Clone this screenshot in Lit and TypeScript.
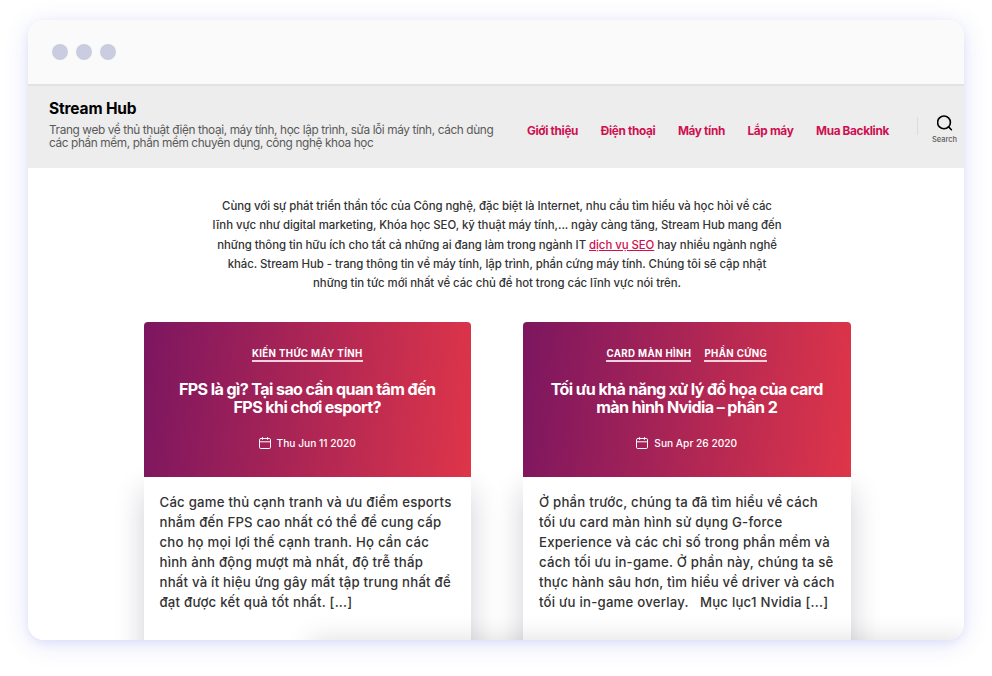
import { LitElement, html, css } from "lit";
import { customElement, property } from "lit/decorators.js";

interface Post {
  categories: string[];
  title: string[];
  date: string;
  excerpt: string[];
}

const NAV = ["Giới thiệu", "Điện thoại", "Máy tính", "Lắp máy", "Mua Backlink"];

const POSTS: Post[] = [
  {
    categories: ["Kiến thức máy tính"],
    title: ["FPS là gì? Tại sao cần quan tâm đến", "FPS khi chơi esport?"],
    date: "Thu Jun 11 2020",
    excerpt: [
      "Các game thủ cạnh tranh và ưu điểm esports",
      "nhắm đến FPS cao nhất có thể để cung cấp",
      "cho họ mọi lợi thế cạnh tranh. Họ cần các",
      "hình ảnh động mượt mà nhất, độ trễ thấp",
      "nhất và ít hiệu ứng gây mất tập trung nhất để",
      "đạt được kết quả tốt nhất. [...]",
    ],
  },
  {
    categories: ["Card màn hình", "Phần cứng"],
    title: ["Tối ưu khả năng xử lý đồ họa của card", "màn hình Nvidia – phần 2"],
    date: "Sun Apr 26 2020",
    excerpt: [
      "Ở phần trước, chúng ta đã tìm hiểu về cách",
      "tối ưu card màn hình sử dụng G-force",
      "Experience và các chỉ số trong phần mềm và",
      "cách tối ưu in-game. Ở phần này, chúng ta sẽ",
      "thực hành sâu hơn, tìm hiểu về driver và cách",
      "tối ưu in-game overlay.\u00a0\u00a0 Mục lục1 Nvidia [...]",
    ],
  },
];

@customElement("post-card")
export class PostCard extends LitElement {
  @property({ attribute: false }) post!: Post;

  static styles = css`
    :host {
      display: flex;
      flex-direction: column;
      border-radius: 4px;
      box-shadow: 0 168px 30px 0 rgba(20, 20, 60, 0.2);
      background: #fff;
    }
    .head {
      height: 154.5px;
      box-sizing: border-box;
      padding-top: 24px;
      border-radius: 4px 4px 0 0;
      background: linear-gradient(95deg, #7c1660 0%, #de3549 100%);
      color: #fff;
      display: flex;
      flex-direction: column;
      align-items: center;
    }
    .cats {
      display: flex;
      gap: 13px;
      height: 15px;
    }
    .cat {
      font-size: 9.7px;
      line-height: 13px;
      height: 13px;
      padding-top: 1px;
      font-weight: 700;
      letter-spacing: 0.36px;
      text-transform: uppercase;
      border-bottom: 2px solid rgba(255, 255, 255, 0.8);
      white-space: nowrap;
    }
    .title {
      margin: 19px 0 0;
      font-size: 16.1px;
      line-height: 18px;
      font-weight: 700;
      letter-spacing: -0.61px;
      text-align: center;
    }
    .line {
      display: block;
      white-space: nowrap;
    }
    .date {
      display: flex;
      align-items: center;
      gap: 6px;
      margin-top: 19px;
      height: 16px;
      font-size: 10.2px;
      font-weight: 500;
    }
    .excerpt {
      margin: 0;
      padding: 15.3px 16px 0;
      font-size: 13.2px;
      line-height: 20px;
      font-weight: 500;
      letter-spacing: 0.22px;
      color: #333;
    }
  `;

  render() {
    const p = this.post;
    return html`
      <div class="head">
        <div class="cats">${p.categories.map((c) => html`<span class="cat">${c}</span>`)}</div>
        <h2 class="title">${p.title.map((l) => html`<span class="line">${l}</span>`)}</h2>
        <div class="date">
          <svg width="12" height="12" viewBox="0 0 12 12" fill="none" stroke="#fff" stroke-width="1" stroke-linecap="round">
            <rect x="0.5" y="1.5" width="11" height="10" rx="1.2" />
            <path d="M0.5 4.8H11.5M3.6 0.5V2.4M8.4 0.5V2.4" />
          </svg>
          <span>${p.date}</span>
        </div>
      </div>
      <p class="excerpt">${p.excerpt.map((l) => html`<span class="line">${l}</span>`)}</p>
    `;
  }
}

@customElement("app-root")
export class AppRoot extends LitElement {
  static styles = css`
    :host {
      display: block;
      box-sizing: border-box;
      width: 992px;
      height: 676px;
      padding: 20px 28px;
      background: #fff;
      overflow: hidden;
      font-family: Inter, "Liberation Sans", sans-serif;
    }
    .window {
      width: 936px;
      height: 620px;
      border-radius: 16px;
      box-shadow:
        0 4px 24px rgba(60, 80, 220, 0.15),
        0 3px 8px rgba(60, 80, 200, 0.08);
    }
    .clip {
      height: 100%;
      border-radius: 16px;
      overflow: hidden;
      background: #fff;
      position: relative;
    }
    .bar {
      height: 64px;
      display: flex;
      align-items: center;
      gap: 8px;
      padding-left: 24px;
      background: #fafafa;
      border-bottom: 2px solid #e2e2e2;
    }
    .dot {
      width: 16px;
      height: 16px;
      border-radius: 50%;
      background: #cacddf;
    }
    .header {
      height: 82px;
      background: #ededed;
      display: flex;
      box-sizing: border-box;
      padding-left: 21px;
    }
    .brand {
      width: 478px;
      padding-top: 13px;
    }
    .name {
      margin: 0;
      font-size: 15.5px;
      line-height: 20px;
      font-weight: 700;
      letter-spacing: -0.15px;
      color: #000;
    }
    .tag {
      margin: 4.6px 0 0;
      font-size: 11.8px;
      line-height: 13.5px;
      letter-spacing: -0.37px;
      color: #5a5a5a;
    }
    .line {
      display: block;
      white-space: nowrap;
    }
    .nav {
      display: flex;
      gap: 22.6px;
      padding-top: 37px;
      font-size: 11.8px;
      line-height: 16px;
      font-weight: 700;
      letter-spacing: -0.34px;
      color: #cd1150;
      white-space: nowrap;
    }
    .search {
      margin-left: auto;
      display: flex;
      padding-right: 7px;
    }
    .divider {
      width: 1px;
      height: 18px;
      margin: 31px 14px 0 0;
      background: #dcdcdc;
    }
    .find {
      width: 25px;
      display: flex;
      flex-direction: column;
      align-items: center;
      padding-top: 29px;
      font-size: 7.5px;
      line-height: 10px;
      font-weight: 500;
      color: #5c5c5c;
    }
    .glass {
      margin-bottom: 4px;
    }
    .intro {
      margin: 0 0 28.9px 2px;
      padding-top: 29.1px;
      text-align: center;
      font-size: 11.4px;
      line-height: 19.3px;
      font-weight: 500;
      letter-spacing: -0.045px;
      color: #333;
    }
    .link {
      color: #cd1150;
      text-decoration: underline;
    }
    .posts {
      display: grid;
      grid-template-columns: 327.5px 327.5px;
      column-gap: 52px;
      margin-left: 115.5px;
      height: 480px;
    }
    .fade {
      position: absolute;
      left: 282px;
      bottom: -40px;
      width: 662px;
      height: 40px;
      box-shadow: 0 -2px 26px rgba(0, 0, 0, 0.12);
    }
  `;

  render() {
    return html`
      <div class="window">
        <div class="clip">
          <div class="bar"><i class="dot"></i><i class="dot"></i><i class="dot"></i></div>
          <header class="header">
            <div class="brand">
              <h1 class="name">Stream Hub</h1>
              <p class="tag">
                <span class="line">Trang web về thủ thuật điện thoại, máy tính, học lập trình, sửa lỗi máy tính, cách dùng</span>
                <span class="line">các phần mềm, phần mềm chuyên dụng, công nghệ khoa học</span>
              </p>
            </div>
            <nav class="nav">${NAV.map((n) => html`<span>${n}</span>`)}</nav>
            <div class="search">
              <i class="divider"></i>
              <div class="find">
                <svg class="glass" width="16" height="16" viewBox="0 0 16 16" fill="none" stroke="#000" stroke-width="1.6">
                  <circle cx="7" cy="7.4" r="6.4" />
                  <path d="M11.6 11.9L14.4 14.7" stroke-linecap="round" />
                </svg>
                <span>Search</span>
              </div>
            </div>
          </header>
          <p class="intro">
            <span class="line">Cùng với sự phát triển thần tốc của Công nghệ, đặc biệt là Internet, nhu cầu tìm hiểu và học hỏi về các</span>
            <span class="line">lĩnh vực như digital marketing, Khóa học SEO, kỹ thuật máy tính,... ngày càng tăng, Stream Hub mang đến</span>
            <span class="line">những thông tin hữu ích cho tất cả những ai đang làm trong ngành IT <span class="link">dịch vụ SEO</span> hay nhiều ngành nghề</span>
            <span class="line">khác. Stream Hub - trang thông tin về máy tính, lập trình, phần cứng máy tính. Chúng tôi sẽ cập nhật</span>
            <span class="line">những tin tức mới nhất về các chủ đề hot trong các lĩnh vực nói trên.</span>
          </p>
          <section class="posts">
            ${POSTS.map((p) => html`<post-card .post=${p}></post-card>`)}
          </section>
          <div class="fade"></div>
        </div>
      </div>
    `;
  }
}
